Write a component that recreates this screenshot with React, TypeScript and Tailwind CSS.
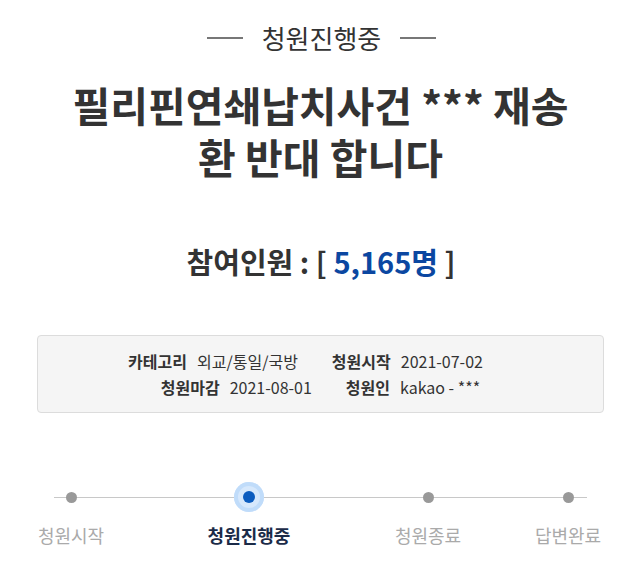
const font = { fontFamily: '"Noto Sans CJK KR", "Noto Sans", sans-serif' };

const steps = [
  { label: "청원시작", ml: "ml-[16px]", active: false },
  { label: "청원진행중", ml: "ml-[68px]", active: true },
  { label: "청원종료", ml: "ml-[69px]", active: false },
  { label: "답변완료", ml: "ml-[30px]", active: false },
];

export default function App() {
  return (
    <div className="w-[629px] h-[583px] bg-white text-[#333]" style={font}>
      <div className="flex items-center justify-center pl-[14px] pt-[20px] h-[36px] box-content">
        <span className="h-[2px] w-[36px] bg-[#777]" />
        <span className="mx-[19px] text-[26px] leading-[36px]">청원진행중</span>
        <span className="h-[2px] w-[36px] bg-[#777]" />
      </div>

      <h1 className="mt-[22px] pl-[12px] text-center text-[41px] font-bold leading-[52px]">
        필리핀연쇄납치사건 *** 재송
        <br />
        환 반대 합니다
      </h1>

      <p className="mt-[59px] pl-[13px] text-center text-[29px] font-bold leading-[40px]">
        참여인원 : [ <span className="text-[#0b47a1]">5,165명</span> ]
      </p>

      <div className="ml-[37px] mr-[25px] mt-[54px] h-[78px] rounded-[4px] border border-[#dcdcdc] bg-[#f5f5f5] pt-[12px] text-[16px] leading-[26px]">
        <div className="flex justify-center gap-[34px] pr-[30px]">
          <div className="flex gap-[10px]">
            <b>카테고리</b>
            <span>외교/통일/국방</span>
          </div>
          <div className="flex gap-[10px]">
            <b>청원시작</b>
            <span>2021-07-02</span>
          </div>
        </div>
        <div className="flex justify-center gap-[34px]">
          <div className="flex gap-[10px]">
            <b>청원마감</b>
            <span>2021-08-01</span>
          </div>
          <div className="flex gap-[10px]">
            <b>청원인</b>
            <span>kakao - ***</span>
          </div>
        </div>
      </div>

      <div className="relative mt-[71px]">
        <div className="absolute left-[54px] right-[42px] top-[13px] h-px bg-[#c8c8c8]" />
        <div className="relative flex">
          {steps.map((s) => (
            <div key={s.label} className={`${s.ml} flex w-[110px] flex-col items-center`}>
              <div className="flex h-[26px] w-[26px] items-center justify-center">
                {s.active ? (
                  <div className="flex h-[30px] w-[30px] shrink-0 items-center justify-center rounded-full bg-[#d6e8fc] shadow-[inset_0_0_0_4px_#c0dcfa]">
                    <div className="h-[12px] w-[12px] rounded-full bg-[#0b5cbf]" />
                  </div>
                ) : (
                  <div className="h-[11px] w-[11px] rounded-full bg-[#999]" />
                )}
              </div>
              <div
                className={`mt-[12px] text-[18px] leading-[26px] ${
                  s.active ? "font-bold text-[#1b2b48]" : "text-[#aaa]"
                }`}
              >
                {s.label}
              </div>
            </div>
          ))}
        </div>
      </div>
    </div>
  );
}
